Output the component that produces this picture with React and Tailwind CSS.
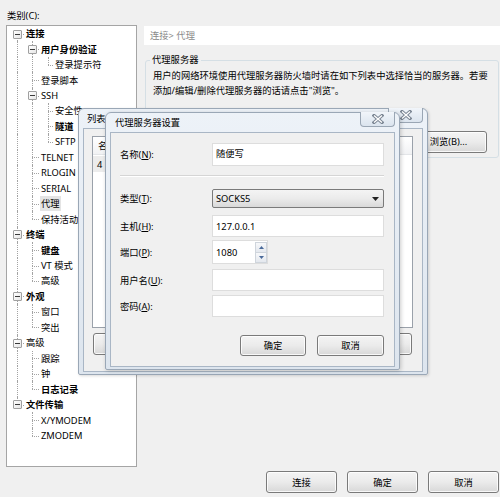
import React from 'react'

const tree = [
  { t: '连接', l: 0, b: true, e: true },
  { t: '用户身份验证', l: 1, b: true, e: true },
  { t: '登录提示符', l: 2 },
  { t: '登录脚本', l: 1 },
  { t: 'SSH', l: 1, e: true },
  { t: '安全性', l: 2 },
  { t: '隧道', l: 2, b: true },
  { t: 'SFTP', l: 2 },
  { t: 'TELNET', l: 1 },
  { t: 'RLOGIN', l: 1 },
  { t: 'SERIAL', l: 1 },
  { t: '代理', l: 1, sel: true },
  { t: '保持活动', l: 1 },
  { t: '终端', l: 0, b: true, e: true },
  { t: '键盘', l: 1, b: true },
  { t: 'VT 模式', l: 1 },
  { t: '高级', l: 1 },
  { t: '外观', l: 0, b: true, e: true },
  { t: '窗口', l: 1 },
  { t: '突出', l: 1 },
  { t: '高级', l: 0, e: true },
  { t: '跟踪', l: 1 },
  { t: '钟', l: 1 },
  { t: '日志记录', l: 1, b: true },
  { t: '文件传输', l: 0, b: true, e: true },
  { t: 'X/YMODEM', l: 1 },
  { t: 'ZMODEM', l: 1 },
]

const lineX = [10, 25, 41]
const textX = [19, 34, 48]

// last sibling at its level?
const isLast = tree.map((it, i) => {
  for (let j = i + 1; j < tree.length; j++) {
    if (tree[j].l < it.l) return true
    if (tree[j].l === it.l) return false
  }
  return true
})

function TreeRow({ it, i }) {
  const guides = []
  for (let k = 0; k < it.l; k++) {
    let a = i - 1
    while (a >= 0 && tree[a].l !== k) a--
    if (a >= 0 && !isLast[a]) guides.push(k)
  }
  const x = lineX[it.l]
  return (
    <div className="relative h-[15.46px]">
      {guides.map((k) => (
        <div key={k} className="absolute top-0 bottom-0 border-l border-dotted border-[#a3a3a3]" style={{ left: lineX[k] }} />
      ))}
      {i !== 0 && (
        <div className="absolute top-0 h-1/2 border-l border-dotted border-[#a3a3a3]" style={{ left: x }} />
      )}
      {!isLast[i] && (
        <div className="absolute top-1/2 bottom-0 border-l border-dotted border-[#a3a3a3]" style={{ left: x }} />
      )}
      <div className="absolute top-1/2 border-t border-dotted border-[#a3a3a3]" style={{ left: x, width: textX[it.l] - x - 2 }} />
      {it.e && (
        <div className="absolute top-[3.5px] w-[9px] h-[9px] border border-[#a0a0a0] rounded-[1px] bg-linear-to-br from-white to-[#e6e6e6] flex items-center justify-center" style={{ left: x - 4 }}>
          <div className="w-[5px] h-[1px] bg-[#3a3a3a]" />
        </div>
      )}
      <div
        className={`absolute top-0 h-full flex items-center whitespace-nowrap ${it.b ? 'font-bold' : ''} ${it.sel ? 'bg-[#e4e4e4] px-[1px] -ml-[1px]' : ''}`}
        style={{ left: textX[it.l] }}
      >
        {it.t}
      </div>
    </div>
  )
}

function Btn({ children, className = '' }) {
  return (
    <div className={`flex items-center justify-center rounded-[3px] border border-[#7a7a7a] bg-linear-to-b from-[#f4f4f4] via-[#ebebeb] to-[#d8d8d8] shadow-[inset_0_0_0_1px_rgba(255,255,255,0.8)] ${className}`}>
      {children}
    </div>
  )
}

function CloseX() {
  return (
    <svg width="12" height="10" viewBox="0 0 12 10">
      <path d="M2 1.5 L10 8.5 M10 1.5 L2 8.5" stroke="#7a8593" strokeWidth="3.2" strokeLinecap="square" />
      <path d="M2 1.5 L10 8.5 M10 1.5 L2 8.5" stroke="#fff" strokeWidth="1.3" />
    </svg>
  )
}

function CloseBtn({ className = '' }) {
  return (
    <div className={`absolute flex items-center justify-center w-[35px] h-[15px] rounded-b-[4px] border border-t-0 border-[#9aa6b4] bg-linear-to-b from-[#f1f5fa] to-[#dbe4ee] ${className}`}>
      <CloseX />
    </div>
  )
}

function Field({ children, className = '' }) {
  return (
    <div className={`flex items-center w-[172px] bg-white border border-[#dddddd] pl-[3px] ${className}`}>{children}</div>
  )
}

function Row({ label, u, rest, className = '', children }) {
  return (
    <div className={`flex items-center ${className}`}>
      <div className="w-[92px] whitespace-nowrap">
        {label}(<span className="underline">{u}</span>){rest}
      </div>
      {children}
    </div>
  )
}

export default function App() {
  return (
    <div className="relative w-[500px] h-[497px] overflow-hidden bg-[#f0f0f0] text-[9.3px] leading-[15px] text-black font-['Noto_Sans','Noto_Sans_CJK_SC',sans-serif]">
      <div className="h-[25px] pl-[7px] pt-[8px]">类别(C):</div>

      <div className="flex h-[442px]">
        {/* category tree */}
        <div className="ml-[6px] w-[131px] h-full border border-[#a5a5a5] bg-white">
          {tree.map((it, i) => (
            <TreeRow key={i} it={it} i={i} />
          ))}
        </div>

        {/* right panel */}
        <div className="flex-1 ml-[7px] flex flex-col">
          <div className="mt-[1px] h-[19px] bg-white pl-[6px] flex items-center text-[#8a8a8a]">连接&gt; 代理</div>
          <div className="relative mt-[15px] ml-[1px] mr-[1px] h-[98px] border border-[#d5dfe5] rounded-[3px] flex flex-col">
            <div className="absolute left-[4px] -top-[9px] px-[2px] bg-[#f0f0f0]">代理服务器</div>
            <div className="pl-[7px] pt-[6.5px] whitespace-nowrap">
              用户的网络环境使用代理服务器防火墙时请在如下列表中选择恰当的服务器。若要
              <br />
              添加/编辑/删除代理服务器的话请点击"浏览"。
            </div>
            <Btn className="mt-[33px] self-end mr-[11px] w-[77px] h-[22px]">浏览(B)...</Btn>
          </div>
        </div>
      </div>

      <div className="mt-[4px] flex justify-end gap-[10px] pr-[1px]">
        <Btn className="w-[71px] h-[22px]">连接</Btn>
        <Btn className="w-[71px] h-[22px]">确定</Btn>
        <Btn className="w-[71px] h-[22px]">取消</Btn>
      </div>

      {/* list dialog behind */}
      <div className="absolute left-[78px] top-[108px] w-[350px] h-[267px] rounded-t-[6px] rounded-b-[2px] border border-[#9aa7b6] bg-linear-to-b from-[#edf2f8] to-[#dde5ee] px-[4px] pb-[2px] flex flex-col shadow-[1px_1px_3px_rgba(0,0,0,0.15)]">
        <div className="h-[19px] pl-[4px] flex items-center">
          <span className="w-[22px] overflow-hidden whitespace-nowrap">列表(</span>
        </div>
        <CloseBtn className="right-[4px] -top-[1px]" />
        <div className="flex-1 border border-[#a9b6c5] bg-[#f0f0f0] flex flex-col">
          <div className="ml-[8px] mt-[7px] w-[321px] h-[192px] border border-[#9aa1aa] bg-white">
            <div className="h-[18px] flex items-center pl-[5px] bg-linear-to-b from-white to-[#f1f2f4] border-b border-[#e3e5e8]">名称</div>
            <div className="mt-[1px] h-[16px] w-[14px] flex items-center pl-[4px] bg-[#ececec]">4</div>
          </div>
          <div className="flex mt-[5px] ml-[9px] mr-[10px] justify-between">
            <Btn className="w-[70px] h-[22px]">添加</Btn>
            <Btn className="w-[70px] h-[22px]">关闭</Btn>
          </div>
        </div>
      </div>

      {/* proxy settings dialog */}
      <div className="absolute left-[105px] top-[112px] w-[295px] h-[258px] rounded-t-[6px] rounded-b-[2px] border border-[#9aa7b6] bg-linear-to-b from-[#edf2f8] to-[#dde5ee] px-[4px] pb-[2px] flex flex-col shadow-[1px_1px_4px_rgba(0,0,0,0.2)]">
        <div className="h-[19px] pl-[5px] flex items-center">代理服务器设置</div>
        <CloseBtn className="right-[4px] -top-[1px]" />
        <div className="flex-1 border border-[#a9b6c5] bg-[#f0f0f0] pl-[9px] pr-[10px] flex flex-col">
          <Row label="名称" u="N" rest=":" className="mt-[10px]">
            <Field className="h-[23px] pb-[2px]">随便写</Field>
          </Row>
          <div className="mt-[9px] h-[2px] border-t border-[#d5d5d5] border-b border-b-white" />
          <Row label="类型" u="T" rest=":" className="mt-[12px]">
            <div className="relative w-[172px] h-[19px] flex items-center pl-[3px] rounded-[2px] border border-[#7a7a7a] bg-linear-to-b from-[#f4f4f4] via-[#ebebeb] to-[#d9d9d9]">
              SOCKS5
              <svg className="absolute right-[4px] top-[7px]" width="7" height="4" viewBox="0 0 7 4">
                <path d="M0 0 H7 L3.5 4 Z" fill="#222" />
              </svg>
            </div>
          </Row>
          <Row label="主机" u="H" rest=":" className="mt-[7px]">
            <Field className="h-[22px]">127.0.0.1</Field>
          </Row>
          <Row label="端口" u="P" rest=":" className="mt-[3px]">
            <div className="w-[56px] h-[24px] bg-white border border-[#dddddd] flex">
              <div className="flex-1 pl-[3px] flex items-center">1080</div>
              <div className="w-[12px] flex flex-col">
                <div className="h-[11px] mt-[1px] border border-[#cfd5dc] bg-linear-to-b from-[#f7f8fa] to-[#e4e8ee] flex items-center justify-center">
                  <svg width="5" height="3" viewBox="0 0 5 3"><path d="M0 3 H5 L2.5 0 Z" fill="#4a6a9a" /></svg>
                </div>
                <div className="h-[10px] border border-t-0 border-[#cfd5dc] bg-linear-to-b from-[#f7f8fa] to-[#e4e8ee] flex items-center justify-center">
                  <svg width="5" height="3" viewBox="0 0 5 3"><path d="M0 0 H5 L2.5 3 Z" fill="#4a6a9a" /></svg>
                </div>
              </div>
            </div>
          </Row>
          <Row label="用户名" u="U" rest=":" className="mt-[5px]">
            <Field className="h-[22px]" />
          </Row>
          <Row label="密码" u="A" rest=":" className="mt-[4px]">
            <Field className="h-[22px]" />
          </Row>
          <div className="mt-[18px] flex justify-end gap-[11px]">
            <Btn className="w-[66px] h-[21px]">确定</Btn>
            <Btn className="w-[67px] h-[21px]">取消</Btn>
          </div>
        </div>
      </div>
    </div>
  )
}
